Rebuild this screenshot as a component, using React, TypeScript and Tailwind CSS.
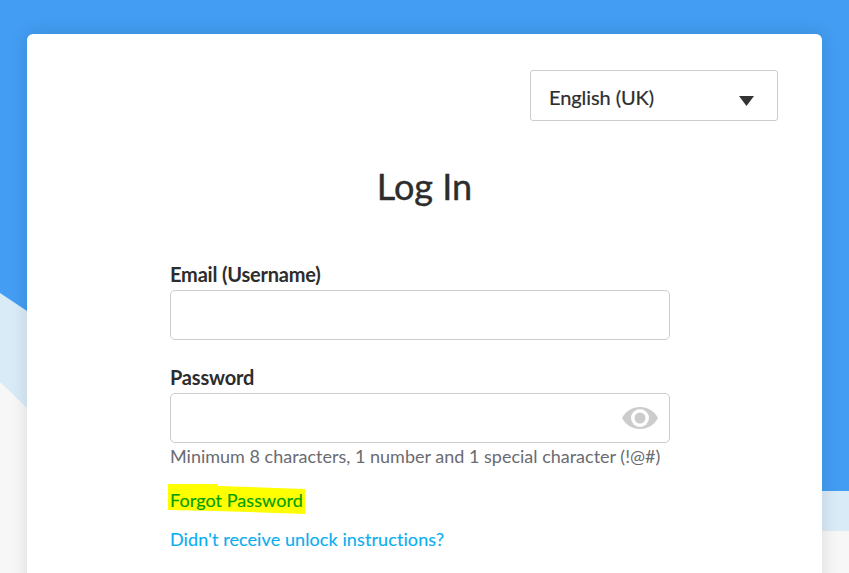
function Field({ label, children }: { label: string; children?: React.ReactNode }) {
  return (
    <div>
      <label className="block text-[20px] leading-[22px] font-bold text-[#2d2d2d] tracking-[-0.2px]">{label}</label>
      <div className="relative mt-[5px] h-[50px] rounded-[5px] border border-[#cccccc] bg-white">
        {children}
      </div>
    </div>
  );
}

export default function App() {
  return (
    <div className="relative h-[573px] w-[849px] overflow-hidden bg-[#f7f7f7] font-['Lato',sans-serif]">
      {/* Background shapes */}
      <svg className="absolute inset-0" width="849" height="573" viewBox="0 0 849 573">
        <polygon points="0,382 27,408 27,560 822,531 849,531 849,400 0,280" fill="#d9ebf7" />
        <polygon points="0,0 849,0 849,491 822,491 27,311 0,293" fill="#439df2" />
      </svg>

      <main className="absolute left-[27px] top-[34px] h-[560px] w-[795px] rounded-t-[6px] bg-white px-[143px] pt-[36px] shadow-[0_0_18px_rgba(0,0,0,0.12)]">
        <div className="-mr-[99px] flex justify-end">
          <div className="flex h-[51px] w-[248px] items-center justify-between rounded-[3px] border border-[#cccccc] pl-[18px] pr-[23px] text-[20px] text-[#2d2d2d]">
            <span className="pt-[2px] tracking-[-0.08px] [-webkit-text-stroke:0.2px]">English (UK)</span>
            <svg width="15" height="10" viewBox="0 0 15 10" className="mt-[11px]">
              <polygon points="0,0 15,0 7.5,10" fill="#333333" />
            </svg>
          </div>
        </div>

        <h1 className="mt-[43px] -ml-[143px] -mr-[143px] text-center text-[36px] leading-[44px] text-[#2d2d2d] [-webkit-text-stroke:0.4px]">Log In</h1>

        <form className="mt-[55px] w-[500px]">
          <Field label="Email (Username)" />
          <div className="mt-[26px]">
            <Field label="Password">
              <svg className="absolute right-[11px] top-[12px]" width="36" height="24" viewBox="0 0 36 24">
                <path d="M0 12C4 5 10 1 18 1s14 4 18 11c-4 7-10 11-18 11S4 19 0 12z" fill="#cccccc" />
                <circle cx="18" cy="12" r="9" fill="#ffffff" />
                <circle cx="18" cy="12" r="5.5" fill="#cccccc" />
              </svg>
            </Field>
          </div>
          <p className="mt-[1px] text-[18px] leading-[24px] text-[#6b6b70]">Minimum 8 characters, 1 number and 1 special character (!@#)</p>

          <div className="relative mt-[19px] h-[26px] w-max">
            <svg className="absolute -left-[2px] -top-[3px]" width="137" height="31" viewBox="0 0 137 31">
              <polygon points="0,0 49,0 50,2 137,5 137,30 49,27 0,26" fill="#ffff00" />
            </svg>
            <a className="relative text-[18px] leading-[26px] tracking-[0.07px] text-[#00a000] [-webkit-text-stroke:0.15px]">Forgot Password</a>
          </div>
          <a className="mt-[13px] block text-[18px] leading-[26px] tracking-[0.09px] text-[#0aaef0] [-webkit-text-stroke:0.15px]">Didn't receive unlock instructions?</a>
        </form>
      </main>
    </div>
  );
}
